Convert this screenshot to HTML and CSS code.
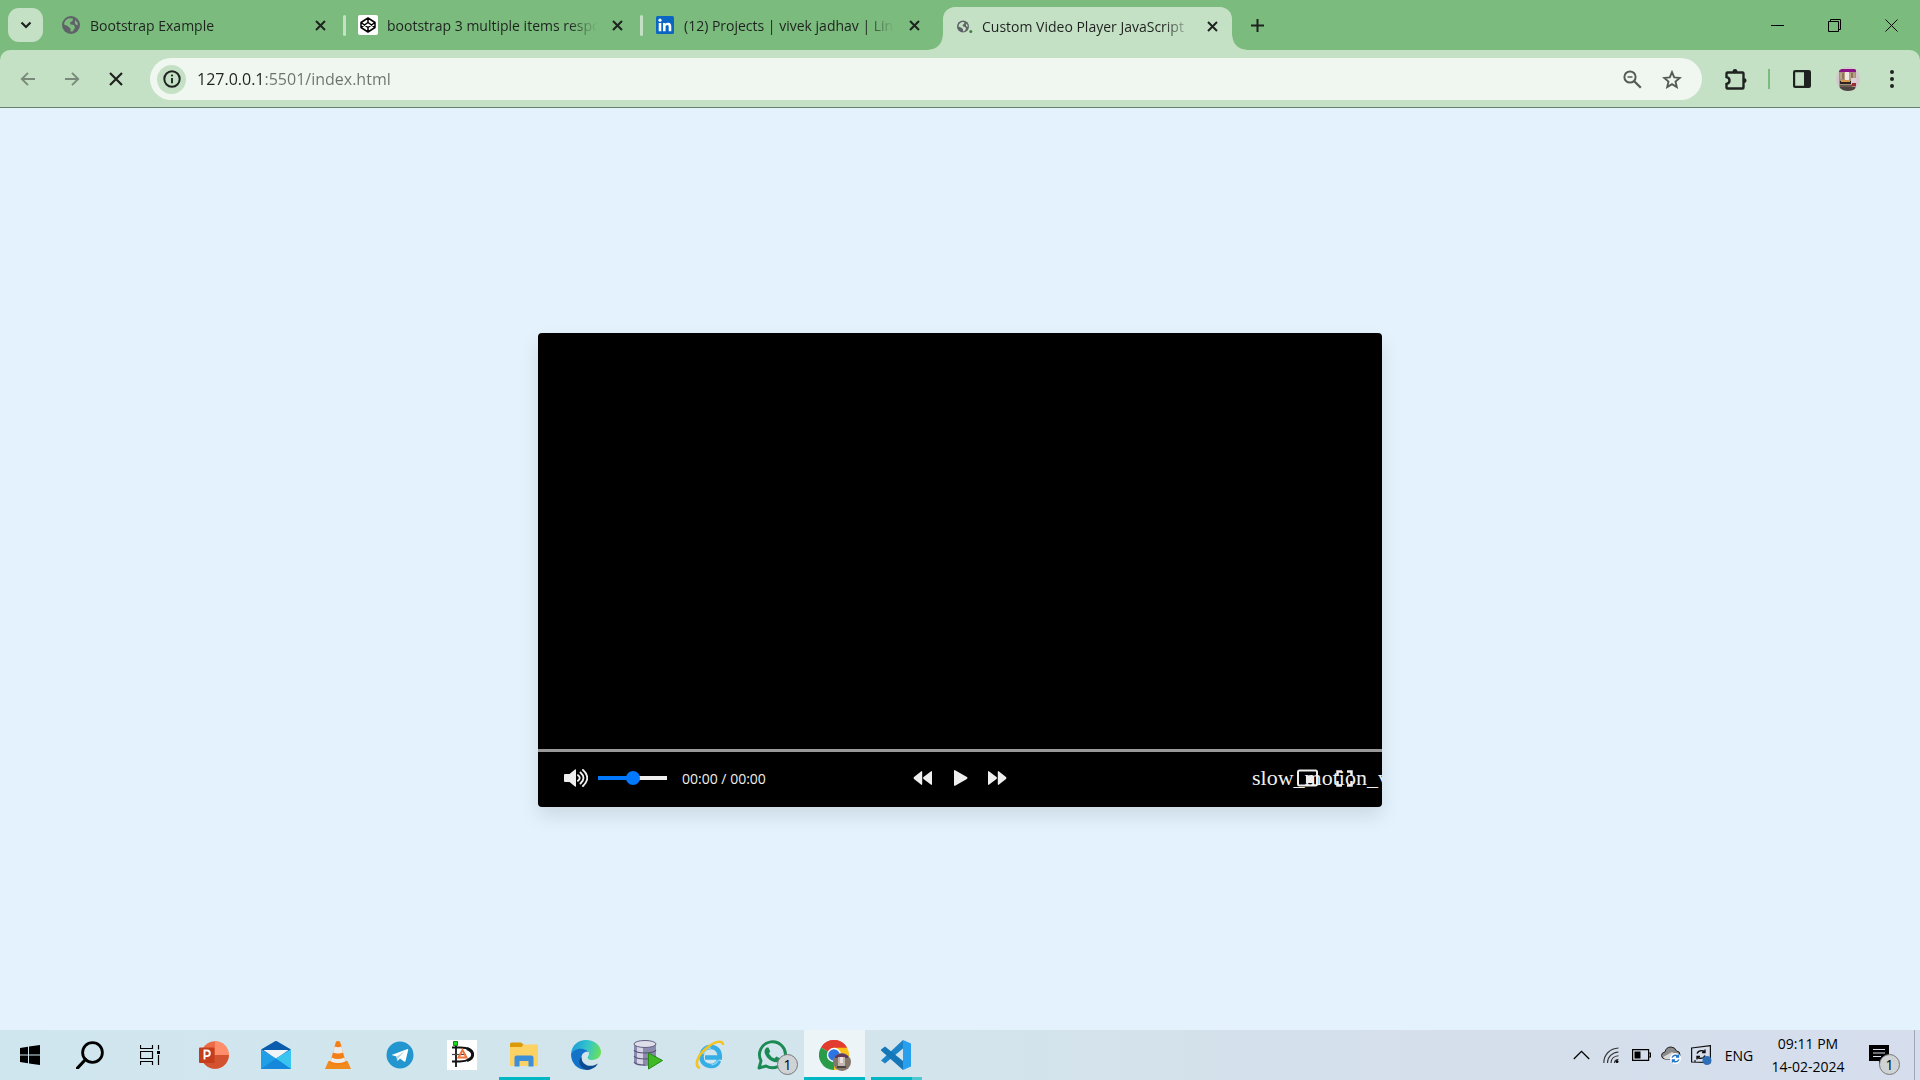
FILE: index.html
```html
<!DOCTYPE html>
<html lang="en">
<head>
  <meta charset="UTF-8">
  <meta name="viewport" content="width=device-width, initial-scale=1.0">
  <title>Custom Video Player JavaScript</title>
  <link rel="stylesheet" href="styles.css">
</head>
<body>

  <header class="browser">
    <div class="tab-strip">
      <button class="tab-search" aria-label="Search tabs">
        <svg width="12" height="8" viewBox="0 0 12 8"><path d="M1.5 1.5 6 6l4.500-4.500" fill="none" stroke="#1f2320" stroke-width="2.200"/></svg>
      </button>

      <div class="tab">
        <span class="tab-icon"><svg width="18" height="18" viewBox="0 0 18 18"><circle cx="9" cy="9" r="9" fill="#5f6368"/><path d="M7 2.200 11 2.500 10.500 5 8 6.500 8.500 8.500 12 9 13 12 10.500 15.500 8.500 15.500 8.500 12.500 5.500 10 2 8.500C2 5.500 4 3 7 2.200zM13 4l2.500 2.500.3 3L13 8z" fill="#7bbb7d"/></svg></span>
        <span class="tab-title">Bootstrap Example</span>
        <button class="tab-close" aria-label="Close tab"><svg width="11" height="11" viewBox="0 0 11 11"><path d="M1 1l9 9M10 1l-9 9"/></svg></button>
      </div>

      <div class="tab divided">
        <span class="tab-icon codepen"><svg width="16" height="16" viewBox="0 0 16 16"><path d="M8 1l7 4.500v5L8 15l-7-4.500v-5zM8 1v4.500M8 10.500V15M1 5.500l7 5 7-5M1 10.500l7-5 7 5" fill="none" stroke="#000" stroke-width="1.500" stroke-linejoin="round"/></svg></span>
        <span class="tab-title">bootstrap 3 multiple items responsive</span>
        <button class="tab-close" aria-label="Close tab"><svg width="11" height="11" viewBox="0 0 11 11"><path d="M1 1l9 9M10 1l-9 9"/></svg></button>
      </div>

      <div class="tab divided">
        <span class="tab-icon"><svg width="18" height="18" viewBox="0 0 18 18"><rect width="18" height="18" rx="1.500" fill="#0a66c2"/><path d="M2.700 7h2.600v8.300H2.700zM7 7h2.500v1.200C10 7.300 11 6.800 12.100 6.800c2.600 0 3.200 1.700 3.200 4v4.500h-2.600v-4c0-1-.1-2.200-1.400-2.200s-1.700 1-1.700 2.100v4.100H7z" fill="#fff"/><circle cx="4" cy="4.200" r="1.600" fill="#fff"/></svg></span>
        <span class="tab-title">(12) Projects | vivek jadhav | LinkedIn</span>
        <button class="tab-close" aria-label="Close tab"><svg width="11" height="11" viewBox="0 0 11 11"><path d="M1 1l9 9M10 1l-9 9"/></svg></button>
      </div>

      <div class="tab active">
        <span class="tab-icon"><svg width="16" height="14" viewBox="0 0 16 14"><circle cx="6" cy="6.500" r="6" fill="#5f6368"/><path d="M5 2l2.500.3L7 4 5.500 5 6 6.500l2.300.5.7 2-1.700 2.300H6V9L4 7.500 1.500 6.500C1.500 4.500 3 2.500 5 2zM9 3.500l1.500 1.500.2 2L9 6z" fill="#c5e1c5"/><circle cx="13.800" cy="11.500" r="1.500" fill="#3c8243"/></svg></span>
        <span class="tab-title">Custom Video Player JavaScript</span>
        <button class="tab-close" aria-label="Close tab"><svg width="11" height="11" viewBox="0 0 11 11"><path d="M1 1l9 9M10 1l-9 9"/></svg></button>
      </div>

      <button class="new-tab" aria-label="New tab"><svg width="13" height="13" viewBox="0 0 13 13"><path d="M6.500 0v13M0 6.500h13" stroke="#1f2320" stroke-width="2"/></svg></button>

      <div class="window-buttons">
        <button aria-label="Minimize"><svg width="13" height="13" viewBox="0 0 13 13"><path d="M0 6.500h13" stroke="#000"/></svg></button>
        <button aria-label="Restore"><svg width="13" height="13" viewBox="0 0 13 13"><path d="M.5 2.500h10v10H.5zM2.500 2.500v-2h10v10h-2" fill="none" stroke="#000"/></svg></button>
        <button aria-label="Close"><svg width="13" height="13" viewBox="0 0 13 13"><path d="M.5.5l12 12M12.500.5l-12 12" stroke="#000"/></svg></button>
      </div>
    </div>

    <div class="toolbar">
      <button class="tool faded" aria-label="Back"><svg width="16" height="14" viewBox="0 0 16 14"><path d="M15 7H2M8 .8 1.800 7 8 13.200" fill="none" stroke="#1f2320" stroke-width="1.900"/></svg></button>
      <button class="tool faded" aria-label="Forward"><svg width="16" height="14" viewBox="0 0 16 14"><path d="M1 7h13M8 .8 14.200 7 8 13.200" fill="none" stroke="#1f2320" stroke-width="1.900"/></svg></button>
      <button class="tool" aria-label="Stop loading"><svg width="14" height="14" viewBox="0 0 14 14"><path d="M1 1l12 12M13 1 1 13" stroke="#1f2320" stroke-width="2.200"/></svg></button>

      <div class="address-bar">
        <button class="site-info" aria-label="Site information"><svg width="18" height="18" viewBox="0 0 18 18"><circle cx="9" cy="9" r="7.700" fill="none" stroke="#1f2320" stroke-width="2"/><path d="M9 8v5.200" stroke="#1f2320" stroke-width="1.900"/><circle cx="9" cy="5.500" r="1.100" fill="#1f2320"/></svg></button>
        <input class="address" type="text" aria-label="Address" value="127.0.0.1:5501/index.html" spellcheck="false">
        <button class="address-tool" aria-label="Zoom"><svg width="19" height="19" viewBox="0 0 19 19" fill="none" stroke="#555c57"><circle cx="7" cy="7" r="5.600" stroke-width="2"/><path d="M11 11l6.800 6.800" stroke-width="2.300"/><path d="M4.500 7h5" stroke-width="1.500"/></svg></button>
        <button class="address-tool" aria-label="Bookmark this page"><svg width="20" height="19" viewBox="0 0 20 19"><path d="M10 2.200l2.200 5.200 5.600.5-4.300 3.700 1.300 5.500L10 14.200l-4.800 2.900 1.300-5.500L2.200 7.900l5.600-.5z" fill="none" stroke="#555c57" stroke-width="1.900"/></svg></button>
      </div>

      <button class="tool extensions" aria-label="Extensions"><svg width="22" height="22" viewBox="0 0 22 22"><path d="M2.500 4.500h15q1 0 1 1v14q0 1-1 1h-15q-1 0-1-1V16q3-.8 3-3.500T1.500 9V5.500q0-1 1-1z" fill="none" stroke="#1f2320" stroke-width="2.400"/><path d="M7.500 4a2.500 3 0 0 1 5 0zM18.500 10a3 2.500 0 0 1 0 5z" fill="#1f2320"/></svg></button>
      <span class="separator"></span>
      <button class="tool" aria-label="Side panel"><svg width="18" height="18" viewBox="0 0 18 18"><rect x="1.100" y="1.100" width="15.800" height="15.800" rx="1" fill="none" stroke="#1f2320" stroke-width="2.200"/><path d="M11 1h6v16h-6z" fill="#1f2320"/></svg></button>
      <button class="tool avatar" aria-label="Profile">
        <svg width="24" height="24" viewBox="0 0 24 24">
          <clipPath id="face"><circle cx="12" cy="12" r="12"/></clipPath>
          <g clip-path="url(#face)">
            <path d="M0 0h24v24H0z" fill="#d3c9cc"/><path d="M3 2h17v21H3z" fill="#a68f79"/><path d="M3 2h17v3H3z" fill="#8b1587"/><path d="M4 6h15v6H4z" fill="#b7a285"/><path d="M6 6h2v6H6zM15 6h2v5h-2z" fill="#8d7560"/><path d="M9 5h4v9H9z" fill="#efe9e0"/><path d="M4 14h12v3H4z" fill="#2c2422"/><path d="M5 13h9v2H5z" fill="#d99a4a"/><path d="M15 11h5v6h-5z" fill="#d9cfd4"/><path d="M16 16h4v3h-4z" fill="#9c2a37"/><path d="M4 18h12v2H4z" fill="#6b5a50"/><path d="M4 20h15v4H4z" fill="#4c4440"/>
          </g>
        </svg>
      </button>
      <button class="tool" aria-label="Menu"><svg width="4" height="18" viewBox="0 0 4 18" fill="#1f2320"><circle cx="2" cy="2" r="2"/><circle cx="2" cy="9" r="2"/><circle cx="2" cy="16" r="2"/></svg></button>
    </div>
  </header>

  <main class="page">
    <div class="container">
      <div class="screen"></div>
      <div class="video-timeline"></div>
      <div class="video-controls">
        <div class="options left">
          <button class="option" aria-label="Volume"><svg width="24" height="18" viewBox="0 0 24 18"><path d="M0 6q0-1 1-1h4.500L11 .5q1-.8 1 .5v16q0 1.300-1 .5L5.500 13H1q-1 0-1-1z" fill="#efefef"/><path d="M14 6.200q3.500 2.800 0 5.600M16.500 3.500q6 5.500 0 11M19 1q8.500 8 0 16" fill="none" stroke="#efefef" stroke-width="1.900" stroke-linecap="round"/></svg></button>
          <input class="volume" type="range" min="0" max="1" step="any" value="0.5" aria-label="Volume level">
          <div class="video-timer"><span>00:00</span><span> / </span><span>00:00</span></div>
        </div>
        <div class="options center">
          <button class="option" aria-label="Skip backward"><svg width="20" height="16" viewBox="0 0 20 16"><path d="M9.200 2v12q0 1.500-1.200.5L1 9Q0 8 1 7l7-5.500Q9.200.5 9.200 2zM19 2v12q0 1.500-1.200.5L10.500 9q-1-1 0-2l7.300-5.500Q19 .5 19 2z" fill="#efefef"/></svg></button>
          <button class="option" aria-label="Play"><svg width="15" height="16" viewBox="0 0 15 16"><path d="M1 1.200Q1-.5 2.500.4l11 6.400q2 1.200 0 2.400l-11 6.400Q1 16.500 1 14.800z" fill="#efefef"/></svg></button>
          <button class="option" aria-label="Skip forward"><svg width="20" height="16" viewBox="0 0 20 16"><path d="M10.800 2v12q0 1.500 1.200.5L19 9q1-1 0-2l-7-5.500Q10.800.5 10.800 2zM1 2v12q0 1.500 1.200.5L9.500 9q1-1 0-2L2.200 1.500Q1 .5 1 2z" fill="#efefef"/></svg></button>
        </div>
        <div class="options right">
          <button class="option speed">slow_motion_video</button>
          <button class="option" aria-label="Picture in picture"><svg width="21" height="18" viewBox="0 0 21 18"><rect x="1" y="1.500" width="19" height="15" rx="1.500" fill="none" stroke="#efefef" stroke-width="2"/><path d="M9 7h8v7H9z" fill="#efefef"/></svg></button>
          <button class="option" aria-label="Fullscreen"><svg width="17" height="17" viewBox="0 0 17 17"><path d="M6 1.500H1.500V6M11 1.500h4.500V6M6 15.500H1.500V11M11 15.500h4.500V11" fill="none" stroke="#efefef" stroke-width="2.500"/></svg></button>
        </div>
      </div>
    </div>
  </main>

  <footer class="taskbar">
    <button class="sys" aria-label="Start"><svg width="20" height="20" viewBox="0 0 20 20"><path d="M0 3l8-1.200v7.700H0zM9 1.600 20 0v9.500H9zM0 10.500h8v7.700L0 17zM9 10.500h11V20L9 18.400z"/></svg></button>
    <button class="sys" aria-label="Search"><svg width="28" height="28" viewBox="0 0 28 28"><circle cx="16.500" cy="11.500" r="9.900" fill="none" stroke="#000" stroke-width="2.800"/><path d="M9.500 18.500 1.500 27" stroke="#000" stroke-width="3.200" stroke-linecap="round"/></svg></button>
    <button class="sys" aria-label="Task view"><svg width="21" height="20" viewBox="0 0 21 20"><path d="M.5 0v3.500h12V0M.5 6.500h12v7H.5zM.5 20v-3.500h12V20M18.500 0v4.500M18.500 10v10" fill="none" stroke="#000" stroke-width="1.200"/><path d="M17 6h3v3h-3z"/></svg></button>

    <div class="apps">
      <button class="app" aria-label="PowerPoint"><svg width="30" height="30" viewBox="0 0 30 30"><circle cx="16" cy="15" r="13.800" fill="#ed6c47"/><path d="M16 1.200A13.800 13.800 0 0 1 29.800 15H16z" fill="#ff8f6b"/><path d="M2.200 15h27.600a13.800 13.800 0 0 1-27.600 0z" fill="#d35230"/><rect x="0" y="7.500" width="15.500" height="15.500" rx="1" fill="#c43e1c"/><path d="M5.500 19.500v-9H8a2.700 2.700 0 0 1 0 5.600H5.500" fill="none" stroke="#fff" stroke-width="1.900"/></svg></button>
      <button class="app" aria-label="Mail"><svg width="30" height="30" viewBox="0 0 30 30"><path d="M0 9.500 14 1.200q1-.6 2 0L30 9.500 15 19z" fill="#0b5cad"/><path d="M2.500 10h25L15 19z" fill="#f2f3f6"/><path d="M0 9.500 15 18.500 30 9.500V29H0z" fill="#1f9fe6"/><path d="M30 9.500 14.500 18.500 30 29z" fill="#3ac5f0"/><path d="M0 29 15 18.500 30 29z" fill="#1688dc"/></svg></button>
      <button class="app" aria-label="VLC"><svg width="26" height="30" viewBox="0 0 26 30"><path d="M3.500 21h19L26 29H0z" fill="#f08a1c"/><path d="M11 1.500q2-1 4 0l6 21.500q-8 4-16 0z" fill="#f47f16"/><path d="M9.600 6.500q3.400 1.600 6.800 0l1.600 6q-5 2.200-10 0zM6.600 17.500q6.400 3 12.800 0l1 4q-7 3-14.800 0z" fill="#ecebeb"/></svg></button>
      <button class="app" aria-label="Telegram"><svg width="28" height="28" viewBox="0 0 28 28"><circle cx="14" cy="14" r="13.500" fill="#2496cf"/><path d="M5.500 14 21.500 8q1-.3.7 1L19.500 20q-.3 1.300-1.500.5l-4-3-2 2q-.7.700-.9-.5L10.500 15.500z" fill="#fff"/><path d="M10.500 15.500 19 10l-6.500 7-1.400 3z" fill="#b9d8ea"/></svg></button>
      <button class="app" aria-label="Drawing tool"><svg width="30" height="30" viewBox="0 0 30 30"><path d="M0 0h30v30H0z" fill="#fff"/><path d="M5 7.500h8c18 0 16 14 0 14H5M9 5v22" fill="none" stroke="#111" stroke-width="1.800"/><path d="M5 14.500h14" stroke="#444" stroke-width="1.200"/><path d="M20 8.500c8 3 7 10 0 12" fill="none" stroke="#111" stroke-width="3"/><path d="M11.500 17.500 15.500 10l4 7.500z" fill="none" stroke="#f0743a" stroke-width="2"/><path d="M6.500 1.500h4v4h-4z" fill="#1cd91c" stroke="#128512"/></svg></button>
      <button class="app open" aria-label="File Explorer"><svg width="28" height="26" viewBox="0 0 28 26"><path d="M0 2q0-1.500 1.500-1.500H11l2.500 2V6H0z" fill="#dc9a06"/><path d="M0 5h11.500l2-2.500H28V24H0z" fill="#fdd264"/><path d="M4.500 24.500v-9q0-2 2-2h15q2 0 2 2v9h-5V19h-9v5.500z" fill="#3d8ed8"/></svg></button>
      <button class="app" aria-label="Edge">
        <svg width="30" height="30" viewBox="0 0 30 30">
          <linearGradient id="edge-top" x1="0" y1=".3" x2="1" y2=".5"><stop offset="0" stop-color="#1a9bdc"/><stop offset=".55" stop-color="#35c6c8"/><stop offset="1" stop-color="#6ae05a"/></linearGradient>
          <path d="M0 14C1 5 7 0 15 0c9 0 15 6 15 12 0 5-4 8-9 8-4 0-5-2-4-3.500C20 12 16 9 11 9 6 9 2 11 0 14z" fill="url(#edge-top)"/>
          <path d="M0 14C3 8 14 7 17.500 12c-4-1-7.500 2-7 7 .4 5 4 10 9.500 10.200C9 32 0 25 0 14z" fill="#1273c9"/>
          <path d="M10.500 17c-.5 7 8 12 16.500 6.500C24.500 28 20 29.800 15.500 30 7 27 7 20 10.500 17z" fill="#0d4a91"/>
        </svg>
      </button>
      <button class="app" aria-label="SQL Developer"><svg width="30" height="30" viewBox="0 0 30 30"><path d="M1 4v18q0 4 11 4t11-4V4z" fill="#8b8bad"/><path d="M4 6v18q3 1.500 6 1.500V7z" fill="#d5d5e6"/><path d="M1 10q2 3 11 3t11-3M1 16q2 3 11 3t11-3M1 22q2 3 11 3" fill="none" stroke="#555275" stroke-width="1.200"/><ellipse cx="12" cy="4" rx="11" ry="3.500" fill="#dedeea" stroke="#625f82"/><path d="M15.500 13 29.500 20.500l-14 8.500z" fill="#3fba25" stroke="#258811"/></svg></button>
      <button class="app" aria-label="Internet Explorer"><svg width="30" height="30" viewBox="0 0 30 30"><path d="M24 20.500C22.500 24 20 26 16 26c-6 0-9.500-4-9.500-9.500S10 7 16 7s9 4.500 8.800 10.500H10" fill="none" stroke="#35aee6" stroke-width="4.500"/><path d="M23 20.500C21.500 23.500 19.500 24.500 16.500 24.700M8.500 14c1-4 4-6 7.500-6" fill="none" stroke="#8ad8f7" stroke-width="1.500"/><path d="M5 28c-6-2-3-12 6-19.500S28-.5 28 5" fill="none" stroke="#f5c320" stroke-width="2.500"/></svg></button>
      <button class="app" aria-label="WhatsApp, 1 unread"><svg width="30" height="30" viewBox="0 0 30 30"><path d="M2 28l2-7.200A13 13 0 1 1 9 26z" fill="none" stroke="#1b8a55" stroke-width="2.900" stroke-linejoin="round"/><path d="M9.500 7.500h2l1.700 4-1.300 2q2 3.700 5.500 5l2-2 4 2c0 3-2.500 4-4.500 3.800C12 21.500 7.500 15 7.500 11.500q0-2.500 2-4z" fill="#1b8a55"/></svg><span class="count">1</span></button>
      <button class="app open current" aria-label="Chrome">
        <svg width="32" height="32" viewBox="0 0 32 32">
          <path d="M15 16 2 8.500A15 15 0 0 1 28 8.500z" fill="#e33b2e"/><path d="M15 16 28 8.500A15 15 0 0 1 15 31z" fill="#fbc116"/><path d="M15 16V31A15 15 0 0 1 2 8.500z" fill="#2a9b49"/><path d="M15 8.500H28L15 16z" fill="#fbc116"/><path d="M2 8.500A15 15 0 0 1 28 8.500H15z" fill="#e33b2e"/><circle cx="15" cy="16" r="7.200" fill="#fff"/><circle cx="15" cy="16" r="5.800" fill="#2d75e5"/>
          <circle cx="23" cy="23" r="9" fill="#85766c"/><path d="M16 17q7-5 13 0v2H16z" fill="#62385d"/><path d="M19 18h7v9h-7z" fill="#c3b6ae"/><path d="M21 18h3v6h-3z" fill="#e8e0da"/><path d="M18 27h9v2h-9z" fill="#4a4340"/>
        </svg>
      </button>
      <button class="app open stacked" aria-label="Visual Studio Code"><svg width="30" height="30" viewBox="0 0 30 30"><path d="M22 0v8.500L4 23.500 0 20.500z" fill="#1b83c8"/><path d="M0 9.500l4-3L22 21v9L0 10.500z" fill="#1577b8"/><path d="M22 0l8 3.500v23L22 30z" fill="#29a0ee"/></svg></button>
    </div>

    <div class="tray">
      <button class="tray-icon" aria-label="Show hidden icons"><svg width="17" height="10" viewBox="0 0 17 10"><path d="M.8 9l7.700-7.700L16.200 9" fill="none" stroke="#000" stroke-width="1.300"/></svg></button>
      <button class="tray-icon" aria-label="Network"><svg width="16" height="16" viewBox="0 0 16 16"><path d="M.8 16C.8 7.500 7 1.500 15.500 1M4.500 16C4.500 10 9 5.500 15.500 5M8 16c0-4 3-7 7.500-7.300M11.500 16c0-2 1.500-3.500 4-3.700" fill="none" stroke="#333" stroke-width="1.100"/><circle cx="14" cy="14.500" r="1.500"/></svg></button>
      <button class="tray-icon" aria-label="Battery"><svg width="19" height="12" viewBox="0 0 19 12"><path d="M.6.6h16v10.800H.6zM16.600 4h1.800v4h-1.800" fill="none" stroke="#000" stroke-width="1.200"/><path d="M2.500 2.500h6v7h-6z"/></svg></button>
      <button class="tray-icon" aria-label="OneDrive"><svg width="20" height="18" viewBox="0 0 20 18"><path d="M4 13q-3.500-.5-3.500-3.500T4 6q1-5 6-5 4 0 5.500 4Q19 5 19 9t-4 4z" fill="#8b8b8b" stroke="#222"/><path d="M2 11l9-5 7 5-3 2H4z" fill="#d8d8d8"/><circle cx="14.500" cy="12.500" r="5.500" fill="#fff"/><path d="M11 11.500q1.500-3 5-2l1.500 1.500M18 13.500q-1.500 3-5 2L11.500 14M17.500 8.500V11H15M11.500 16.500V14H14" fill="none" stroke="#1d74cb" stroke-width="1.400"/></svg></button>
      <button class="tray-icon" aria-label="Windows Update"><svg width="21" height="20" viewBox="0 0 21 20"><path d="M.6 3 19.400.6v17L.6 17zM4 17v-2" fill="none" stroke="#111" stroke-width="1.200"/><path d="M6 8.500q2-4 6.500-2.500l1.500 1.500M14 10.500q-2 4-6.500 2.500L6 11.500M14 4.500v3h-3M6 14.500v-3h3" fill="none" stroke="#111" stroke-width="1.400"/><circle cx="16" cy="15.500" r="4.500" fill="#2d70b9"/></svg></button>
      <button class="language">ENG</button>
      <button class="clock"><span>09:11 PM</span><span>14-02-2024</span></button>
      <button class="notifications" aria-label="1 new notification"><svg width="20" height="20" viewBox="0 0 20 20"><path d="M0 0h20v16h-6l-4 4v-4H0z"/><path d="M4 4.500h12M4 8h12M4 11.500h8" stroke="#d6deed" stroke-width="1.200"/></svg><span class="count">1</span></button>
      <button class="show-desktop" aria-label="Show desktop"></button>
    </div>
  </footer>

</body>
</html>
```
FILE: styles.css
```css
* {
  box-sizing: border-box;
}
body {
  display: flex;
  flex-direction: column;
  height: 100vh;
  margin: 0;
  font-family: "Open Sans", "Noto Sans", sans-serif;
  font-size: 14px;
  color: #1f2320;
  background: #e3f2fd;
  overflow: hidden;
}
button {
  display: flex;
  align-items: center;
  justify-content: center;
  flex-shrink: 0;
  margin: 0;
  padding: 0;
  border: none;
  background: none;
  color: inherit;
  font: inherit;
  cursor: pointer;
}
svg {
  display: block;
  flex-shrink: 0;
}

/* Browser window */
.browser {
  background: #7bbb7d;
}
.tab-strip {
  display: flex;
  align-items: center;
  height: 50px;
  padding-left: 8px;
}
.tab-search {
  width: 35px;
  height: 34px;
  margin-right: 4px;
  border-radius: 11px;
  background: #c5e1c5;
}
.tab {
  position: relative;
  display: flex;
  align-items: center;
  flex: 0 1 289px;
  min-width: 0;
  height: 43px;
  margin-right: 8px;
  padding: 0 6px 0 14px;
}
.tab.divided::before {
  content: "";
  position: absolute;
  left: -1px;
  top: 11px;
  width: 3px;
  height: 21px;
  border-radius: 2px;
  background: #c5e1c5;
}
.tab.active {
  align-self: flex-end;
  margin-left: 5px;
  padding: 0 10px 4px 12px;
  border-radius: 12px 12px 0 0;
  background: #c5e1c5;
}
/* curved feet of the selected tab */
.tab.active::before,
.tab.active::after {
  content: "";
  position: absolute;
  bottom: 0;
  width: 14px;
  height: 14px;
}
.tab.active::before {
  right: 100%;
  background: radial-gradient(circle at 0 0, transparent 13px, #c5e1c5 14px);
}
.tab.active::after {
  left: 100%;
  background: radial-gradient(circle at 100% 0, transparent 13px, #c5e1c5 14px);
}
.tab-icon {
  display: flex;
  align-items: center;
  justify-content: center;
  flex-shrink: 0;
  width: 20px;
  height: 20px;
  margin-right: 9px;
}
.active .tab-icon {
  margin-right: 7px;
}
.codepen {
  border-radius: 2px;
  background: #fff;
}
.tab-title {
  flex: 1;
  overflow: hidden;
  white-space: nowrap;
  -webkit-mask-image: linear-gradient(to left, transparent, #000 28px);
  mask-image: linear-gradient(to left, transparent, #000 28px);
}
.tab-close {
  width: 20px;
  height: 20px;
  margin-left: 10px;
}
.tab-close path {
  stroke: #1f2320;
  stroke-width: 2;
}
.new-tab {
  width: 34px;
  height: 34px;
}
.window-buttons {
  display: flex;
  margin-left: auto;
}
.window-buttons button {
  width: 57px;
  height: 48px;
}

.toolbar {
  display: flex;
  align-items: center;
  padding: 8px 6px 7px;
  border-bottom: 1px solid #66806a;
  border-radius: 10px 10px 0 0;
  background: #c5e1c5;
}
.tool {
  width: 44px;
  height: 42px;
}
.faded {
  opacity: 0.45;
}
.address-bar {
  display: flex;
  align-items: center;
  flex: 1;
  height: 42px;
  margin: 0 12px;
  padding: 0 10px 0 7px;
  border-radius: 21px;
  background: #f0f7f0;
}
.site-info {
  width: 29px;
  height: 29px;
  margin-right: 11px;
  border-radius: 50%;
  background: #c5e1c5;
}
.address {
  flex: 1;
  min-width: 0;
  padding: 0;
  border: none;
  outline: none;
  font: 16px "Open Sans", "Noto Sans", sans-serif;
  /* host is dark, port and path are grey */
  background: linear-gradient(to right, #1f2320 67px, #6b736d 67px);
  -webkit-background-clip: text;
  background-clip: text;
  -webkit-text-fill-color: transparent;
}
.address-tool {
  width: 40px;
  height: 40px;
}
.separator {
  width: 2px;
  height: 20px;
  margin: 0 10px;
  background: #7bbb7d;
}
.avatar {
  margin-left: 2px;
}

/* Video player */
.page {
  display: flex;
  align-items: center;
  justify-content: center;
  flex: 1;
  min-height: 0;
  padding-top: 2px;
}
.container {
  width: 98%;
  max-width: 844px;
  border-radius: 4px;
  background: #000;
  box-shadow: 0 9px 19px rgba(0, 0, 0, 0.1);
  overflow: hidden;
}
.screen {
  height: 416px;
}
.video-timeline {
  height: 3px;
  background: #999;
}
.video-controls {
  display: flex;
  align-items: center;
  padding: 8px 19px 11px;
  color: #efefef;
}
.options {
  display: flex;
  align-items: center;
  flex: 1;
}
.center {
  justify-content: center;
}
.right {
  justify-content: flex-end;
}
.option {
  width: 37px;
  height: 36px;
}
.volume {
  -webkit-appearance: none;
  appearance: none;
  width: 69px;
  height: 4px;
  margin: 0 15px 0 4px;
  background: linear-gradient(to right, #0078ff 50%, #efefef 50%);
}
.volume::-webkit-slider-thumb {
  -webkit-appearance: none;
  width: 14px;
  height: 14px;
  border-radius: 50%;
  background: #0078ff;
}
.video-timer {
  white-space: pre;
}
.speed {
  justify-content: flex-start;
  font-family: "Liberation Serif", serif;
  font-size: 22px;
  white-space: nowrap;
}

/* Taskbar */
.taskbar {
  display: flex;
  height: 50px;
  color: #000;
  background: linear-gradient(to right, #d0e6ee, #d3e4ec 50%, #d5deeb 80%, #d6deed);
}
.sys {
  width: 60px;
}
.apps {
  display: flex;
  gap: 1px;
  margin-left: 4px;
}
.app {
  position: relative;
  width: 61px;
  padding-right: 2px;
}
.app.open::after {
  content: "";
  position: absolute;
  left: 5px;
  right: 5px;
  bottom: 0;
  height: 3px;
  background: #00b7c3;
}
.app.current {
  padding-right: 0;
  background: #edf4f7;
}
.app.current::after {
  left: 0;
  right: 0;
}
.app.stacked::after {
  background: linear-gradient(to right, #00b7c3 80%, #4fc9d1 80%);
}
.count {
  position: absolute;
  left: 35px;
  top: 24px;
  width: 21px;
  height: 21px;
  border: 1px solid #777;
  border-radius: 50%;
  background: #cfd3d5;
  line-height: 19px;
  text-align: center;
}
.tray {
  display: flex;
  margin-left: auto;
}
.tray-icon {
  width: 30px;
}
.language {
  width: 46px;
}
.clock {
  flex-direction: column;
  width: 90px;
  margin-left: 1px;
  line-height: 23px;
}
.notifications {
  position: relative;
  width: 52px;
  margin-right: 9px;
}
.notifications .count {
  left: 26px;
}
.show-desktop {
  width: 6px;
  border-left: 1px solid #9fa7b5;
}
```
